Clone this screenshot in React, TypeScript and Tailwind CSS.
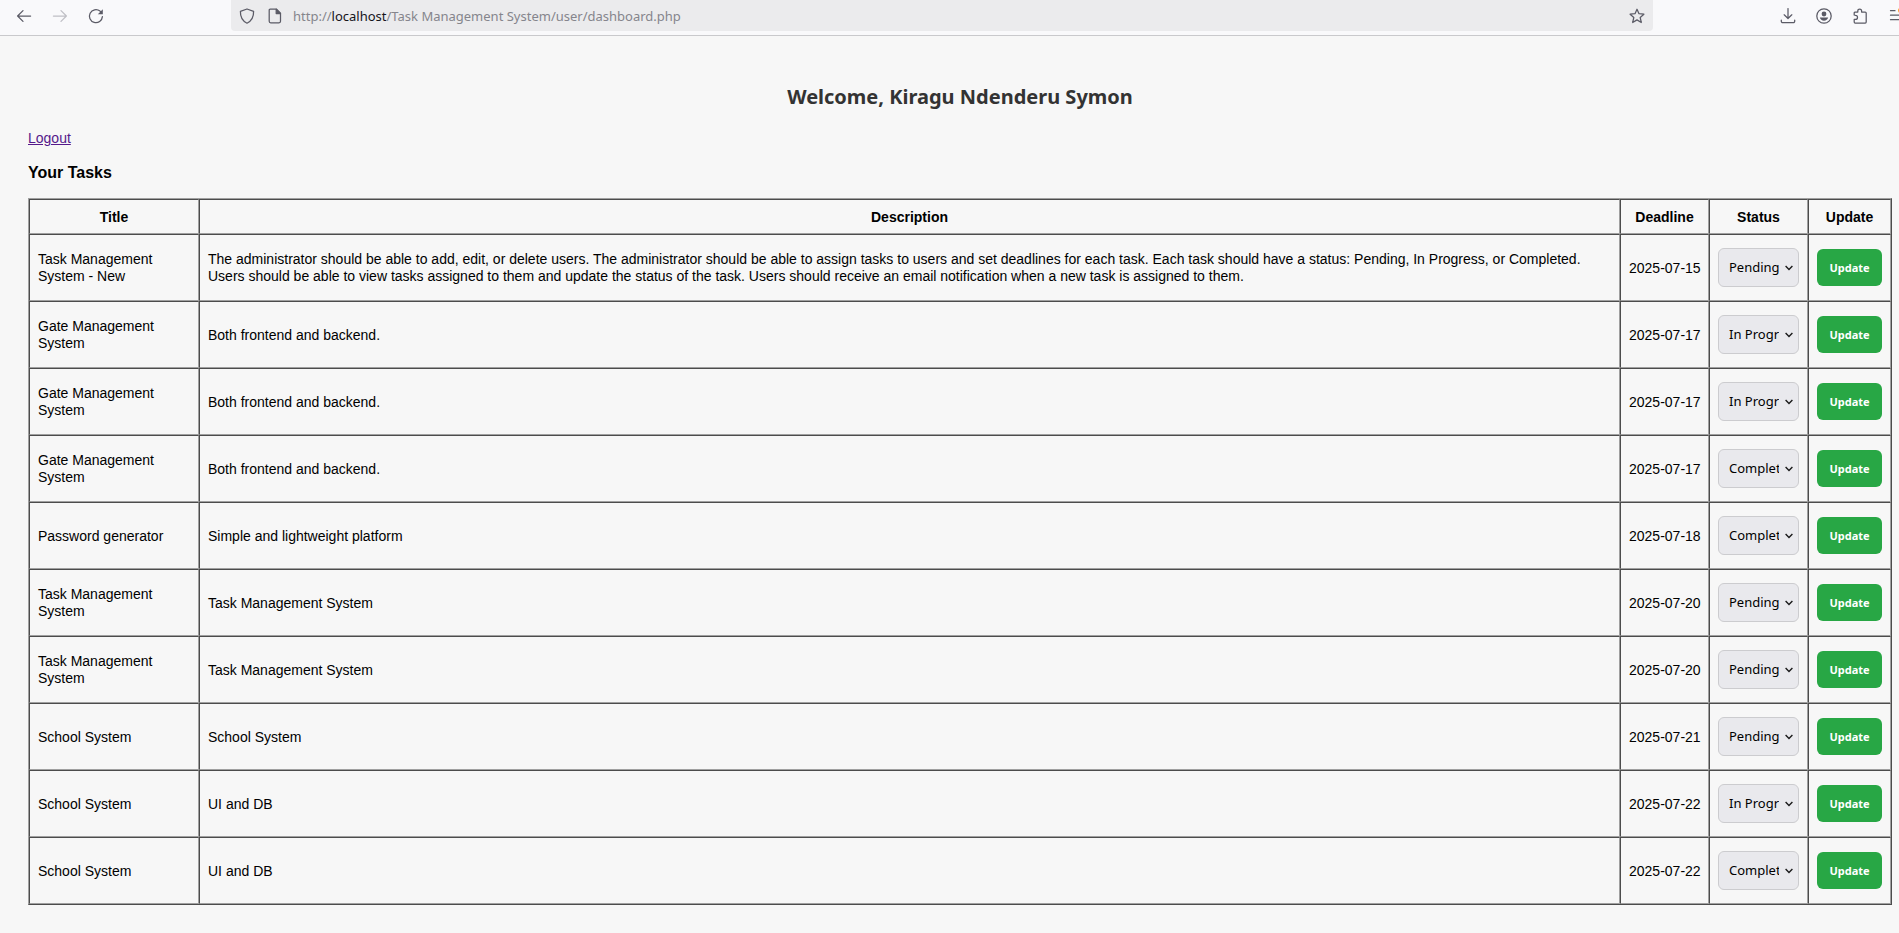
import React from 'react';

type Status = 'Pending' | 'In Progress' | 'Completed';

interface Task {
  title: string;
  description: string;
  deadline: string;
  status: Status;
}

const statuses: Status[] = ['Pending', 'In Progress', 'Completed'];

const tasks: Task[] = [
  {
    title: 'Task Management System - New',
    description:
      'The administrator should be able to add, edit, or delete users. The administrator should be able to assign tasks to users and set deadlines for each task. Each task should have a status: Pending, In Progress, or Completed. Users should be able to view tasks assigned to them and update the status of the task. Users should receive an email notification when a new task is assigned to them.',
    deadline: '2025-07-15',
    status: 'Pending',
  },
  { title: 'Gate Management System', description: 'Both frontend and backend.', deadline: '2025-07-17', status: 'In Progress' },
  { title: 'Gate Management System', description: 'Both frontend and backend.', deadline: '2025-07-17', status: 'In Progress' },
  { title: 'Gate Management System', description: 'Both frontend and backend.', deadline: '2025-07-17', status: 'Completed' },
  { title: 'Password generator', description: 'Simple and lightweight platform', deadline: '2025-07-18', status: 'Completed' },
  { title: 'Task Management System', description: 'Task Management System', deadline: '2025-07-20', status: 'Pending' },
  { title: 'Task Management System', description: 'Task Management System', deadline: '2025-07-20', status: 'Pending' },
  { title: 'School System', description: 'School System', deadline: '2025-07-21', status: 'Pending' },
  { title: 'School System', description: 'UI and DB', deadline: '2025-07-22', status: 'In Progress' },
  { title: 'School System', description: 'UI and DB', deadline: '2025-07-22', status: 'Completed' },
];

const cell = 'border-t border-l border-b border-r border-t-[#4c4c4c] border-l-[#4c4c4c] border-b-[#a0a0a0] border-r-[#a0a0a0] px-2';
const textCell = `${cell} pt-px`;

function Icon({ children, className = '' }: { children: React.ReactNode; className?: string }) {
  return (
    <svg
      viewBox="0 0 16 16"
      className={`h-4 w-4 ${className}`}
      fill="none"
      stroke="currentColor"
      strokeWidth="1.25"
      strokeLinecap="round"
      strokeLinejoin="round"
      aria-hidden="true"
    >
      {children}
    </svg>
  );
}

function BrowserBar() {
  return (
    <header className="flex h-9 items-start overflow-hidden border-b border-[#c9c9cc] bg-[#f9f9fb] text-[#5b5b66]">
      <nav className="flex h-[31px] w-[231px] shrink-0 items-center gap-5 pl-4">
        <button type="button" aria-label="Back">
          <Icon>
            <path d="M14.6 8H1.6M7 2.6 1.6 8 7 13.4" />
          </Icon>
        </button>
        <button type="button" aria-label="Forward" className="text-[#bfbfc5]">
          <Icon>
            <path d="M1.4 8h13M9 2.6 14.4 8 9 13.4" />
          </Icon>
        </button>
        <button type="button" aria-label="Reload">
          <Icon>
            <path d="M14.4 8.6A6.5 6.5 0 1 1 12 3.1l1.4 1.3" />
            <path d="M14.8 1.2v5H9.8z" fill="currentColor" stroke="none" />
          </Icon>
        </button>
      </nav>
      <div className="flex h-[31px] min-w-0 grow items-center rounded-b bg-[#ebebed] px-2">
        <Icon>
          <path d="M8 1 14.6 3.3C14.8 9 12.6 13 8 15.2 3.4 13 1.2 9 1.4 3.3z" />
        </Icon>
        <Icon className="ml-3">
          <path d="M3.2 1.2h6.3l4 4v8.1a1.5 1.5 0 0 1-1.5 1.5H3.7a1.5 1.5 0 0 1-1.5-1.5V2.3a1 1 0 0 1 1-1.1z" />
          <path d="M9.2 1.2v4.4h4.3z" fill="currentColor" />
        </Icon>
        <p className="ml-[10px] grow truncate font-['Noto_Sans',sans-serif] text-[13px] leading-5 text-[#85858c]">
          http://<span className="text-[#15141a]">localhost</span>/Task Management System/user/dashboard.php
        </p>
        <button type="button" aria-label="Bookmark this page">
          <Icon>
            <path d="M8 1.2 10 5.7 14.9 6.2 11.2 9.5 12.3 14.5 8 11.9 3.7 14.5 4.8 9.5 1.1 6.2 6 5.7z" />
          </Icon>
        </button>
      </div>
      <div className="flex h-[31px] w-[246px] shrink-0 items-center gap-5 pl-[127px]">
        <button type="button" aria-label="Downloads">
          <Icon>
            <path d="M8 .6v9.8M4.2 6.8 8 10.5l3.8-3.7M1.3 12v1.2a1.4 1.4 0 0 0 1.4 1.4h10.6a1.4 1.4 0 0 0 1.4-1.4V12" />
          </Icon>
        </button>
        <button type="button" aria-label="Account">
          <Icon>
            <circle cx="8" cy="8" r="7.2" />
            <circle cx="8" cy="6" r="2.4" fill="currentColor" stroke="none" />
            <path d="M3.8 9.6h8.4c-.5 2-2.2 3.2-4.2 3.2s-3.7-1.2-4.2-3.2z" fill="currentColor" stroke="none" />
          </Icon>
        </button>
        <button type="button" aria-label="Extensions">
          <Icon>
            <path d="M2.2 7V5a1 1 0 0 1 1-1h2.6V2.9a1.9 1.9 0 0 1 3.8 0V4h3.6a1 1 0 0 1 1 1v9a1 1 0 0 1-1 1H3.2a1 1 0 0 1-1-1v-2.6h1.3a2 2 0 0 0 0-4z" />
          </Icon>
        </button>
        <button type="button" aria-label="Application menu" className="shrink-0">
          <Icon>
            <path d="M2.5 2.7h4.5M2.5 7.2h13M2.5 11.7h13" />
            <circle cx="12.5" cy="2.5" r="2.5" fill="#ffa436" stroke="none" />
          </Icon>
        </button>
      </div>
    </header>
  );
}

function StatusSelect({ id, value }: { id: string; value: Status }) {
  return (
    <div className="relative">
      <select
        id={id}
        aria-label="Status"
        defaultValue={value}
        className="block h-[39px] w-[81px] appearance-none rounded-md border border-[#cccccf] bg-[#e9e9ed] pr-[19px] pl-[10px] font-['Noto_Sans',sans-serif] text-[13px] text-black"
      >
        {statuses.map((s) => (
          <option key={s}>{s}</option>
        ))}
      </select>
      <svg
        viewBox="0 0 8 6"
        className="pointer-events-none absolute top-[17px] right-[6px] h-[6px] w-2"
        fill="none"
        stroke="#1a1a1a"
        strokeWidth="1.4"
        aria-hidden="true"
      >
        <path d="M.6 1 4 4.5 7.4 1" />
      </svg>
    </div>
  );
}

export default function App() {
  return (
    <div className="min-h-screen bg-[#f7f7f7] font-['Liberation_Sans',Arial,sans-serif] text-black">
      <BrowserBar />
      <main className="pt-[45px] pr-[7px] pb-7 pl-7">
        <h1 className="text-center font-['Noto_Sans',sans-serif] text-xl leading-8 font-bold text-[#333333]">
          Welcome, Kiragu Ndenderu Symon
        </h1>
        <p className="mt-[15px] text-sm leading-5">
          <a href="#logout" className="text-[#551a8b] underline">
            Logout
          </a>
        </p>
        <h2 className="mt-[13px] text-base leading-6 font-bold">Your Tasks</h2>
        <table className="mt-[13px] w-full table-fixed border-separate border-spacing-0 border border-t-[#a0a0a0] border-r-[#4c4c4c] border-b-[#4c4c4c] border-l-[#a0a0a0] text-sm leading-[17px]">
          <colgroup>
            <col className="w-[170px]" />
            <col />
            <col className="w-[89px]" />
            <col className="w-[99px]" />
            <col className="w-[83px]" />
          </colgroup>
          <thead>
            <tr className="h-[35px]">
              {['Title', 'Description', 'Deadline', 'Status', 'Update'].map((h) => (
                <th key={h} scope="col" className={`${textCell} text-center font-bold`}>
                  {h}
                </th>
              ))}
            </tr>
          </thead>
          <tbody>
            {tasks.map((task, i) => (
              <tr key={i} className="h-[67px]">
                <td className={textCell}>{task.title}</td>
                <td className={textCell}>{task.description}</td>
                <td className={`${textCell} whitespace-nowrap`}>{task.deadline}</td>
                <td className={cell}>
                  <StatusSelect id={`status-${i}`} value={task.status} />
                </td>
                <td className={cell}>
                  <button
                    type="button"
                    className="block h-[37px] w-[65px] rounded-md bg-[#28a745] font-['Noto_Sans',sans-serif] text-[11px] font-bold text-white"
                  >
                    Update
                  </button>
                </td>
              </tr>
            ))}
          </tbody>
        </table>
      </main>
    </div>
  );
}
